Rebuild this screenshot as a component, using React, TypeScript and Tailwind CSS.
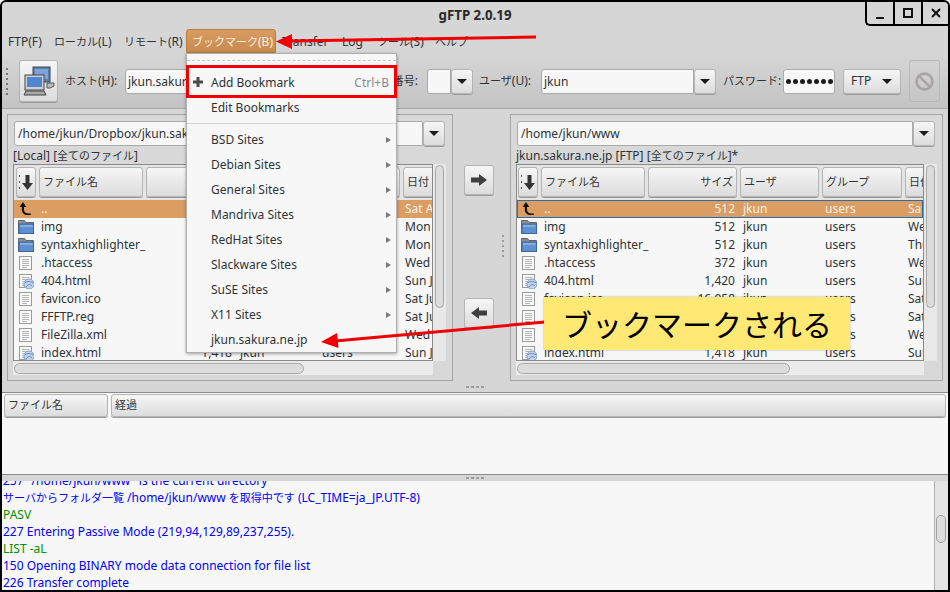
import type { ReactNode } from 'react';
import { Ban, X } from 'lucide-react';

type FileKind = 'up' | 'folder' | 'doc' | 'html';

const files: { kind: FileKind; name: string; size: string; date: string; dateR: string }[] = [
  { kind: 'up', name: '..', size: '512', date: 'Sat Aug', dateR: 'Sat' },
  { kind: 'folder', name: 'img', size: '512', date: 'Mon Jul', dateR: 'Wed' },
  { kind: 'folder', name: 'syntaxhighlighter_', size: '512', date: 'Mon Jul', dateR: 'Thu' },
  { kind: 'doc', name: '.htaccess', size: '372', date: 'Wed Jul', dateR: 'Wed' },
  { kind: 'html', name: '404.html', size: '1,420', date: 'Sun Jul', dateR: 'Sun' },
  { kind: 'doc', name: 'favicon.ico', size: '16,958', date: 'Sat Jul', dateR: 'Sat' },
  { kind: 'doc', name: 'FFFTP.reg', size: '1,024', date: 'Sat Jul', dateR: 'Sat' },
  { kind: 'doc', name: 'FileZilla.xml', size: '2,310', date: 'Wed Jul', dateR: 'Wed' },
  { kind: 'html', name: 'index.html', size: '1,418', date: 'Sun Jul', dateR: 'Sun' },
];

const bookmarks = ['BSD Sites', 'Debian Sites', 'General Sites', 'Mandriva Sites', 'RedHat Sites', 'Slackware Sites', 'SuSE Sites', 'X11 Sites'];

const btn = 'bg-gradient-to-b from-[#f6f6f6] to-[#dcdcdc] border border-[#b4b4b4] rounded-[3px] shadow-[0_1px_0_#9a9a9a]';

// japanese runs sit a bit smaller than the latin text in the reference
const J = ({ children }: { children: ReactNode }) => <span className="text-[11px]">{children}</span>;

const Caret = () => <span className="w-0 h-0 border-x-[5px] border-x-transparent border-t-[5px] border-t-[#1c1c1c]" />;

const ComboBtn = () => (
  <div className={`${btn} w-[22px] h-[25px] flex items-center justify-center shrink-0`}>
    <Caret />
  </div>
);

const FileIcon = ({ kind }: { kind: FileKind }) => {
  if (kind === 'up')
    return (
      <svg width="16" height="16" viewBox="0 0 16 16" className="shrink-0">
        <path d="M5 1 1.500 6h2.300v2.500c0 3.500 2.500 5.500 6 5.500h3v-1.500h-2.500c-2.500 0-4.300-1.500-4.300-4V6h2.300z" fill="#111" />
      </svg>
    );
  if (kind === 'folder')
    return (
      <svg width="16" height="16" viewBox="0 0 16 16" className="shrink-0">
        <path d="M.5 1.500h6l1.500 2h7.500v11H.5z" fill="#8a8f96" stroke="#5f6670" />
        <rect x="1" y="5" width="14.500" height="9.500" fill="#5f90cf" stroke="#3c659c" />
        <rect x="2" y="6" width="12.500" height="2" fill="#86aedd" />
      </svg>
    );
  return (
    <svg width="16" height="16" viewBox="0 0 16 16" className="shrink-0">
      <rect x="1.500" y="1.500" width="12" height="13" fill="#f9f9f9" stroke="#9a9a9a" />
      <path d="M4 4.500h7M4 6.500h7M4 8.500h7M4 10.500h7M4 12.500h5" stroke="#b5b5b5" />
      {kind === 'html' && (
        <>
          <circle cx="11" cy="11" r="5" fill="#c3d5ec" stroke="#7f9fca" />
          <path d="M7 10c2-2 5-2 8 0M8 14c2-3 4-3 6-1" stroke="#5b80b5" fill="none" />
        </>
      )}
    </svg>
  );
};

const HeaderCell = ({ label, className }: { label?: string; className: string }) => (
  <div className={`${btn} shrink-0 flex items-center whitespace-nowrap overflow-hidden ${className}`}>
    {label && <J>{label}</J>}
  </div>
);

const SortCell = () => (
  <div className={`${btn} h-[30px] w-[20px] shrink-0 flex items-center justify-center gap-[2px]`}>
    <span className="flex flex-col gap-[4px]">
      <i className="block w-[1px] h-[2px] bg-[#555]" />
      <i className="block w-[1px] h-[2px] bg-[#555]" />
      <i className="block w-[1px] h-[2px] bg-[#555]" />
    </span>
    <svg width="11" height="15" viewBox="0 0 11 15">
      <path d="M3.500 0h4v8H11l-5.500 7L0 8h3.500z" fill="#333" />
    </svg>
  </div>
);

const Pane = ({ right, path, label }: { right?: boolean; path: string; label: ReactNode }) => (
  <div className={`h-[267px] shrink-0 border border-[#a6a6a6] bg-[#d8d8d8] pt-[6px] ${right ? 'w-[433px]' : 'w-[446px]'}`}>
    <div className="flex ml-[6px] h-[25px]">
      <div className={`h-[25px] bg-[#f7f7f7] border border-[#aaaaaa] rounded-l-[3px] pl-[3px] text-[12px] leading-[23px] overflow-hidden whitespace-nowrap ${right ? 'w-[396px]' : 'w-[409px]'}`}>{path}</div>
      <ComboBtn />
    </div>
    <div className="ml-[5px] h-[18px] text-[12px] leading-[19px] whitespace-nowrap">{label}</div>
    <div className="flex ml-[5px] h-[197px]">
      <div className={`h-[197px] border border-[#8a8a8a] bg-[#f7f7f7] overflow-hidden shrink-0 ${right ? 'w-[408px]' : 'w-[420px]'}`}>
        <div className={`flex pt-[2px] h-[35px] bg-[#e4e4e4] ${right ? 'pl-[1px]' : 'pl-[2px]'}`}>
          <SortCell />
          <HeaderCell label="ファイル名" className="h-[30px] ml-[3px] w-[104px] pl-[3px]" />
          <HeaderCell label={right ? 'サイズ' : ''} className="h-[30px] ml-[3px] w-[89px] pr-[3px] justify-end" />
          <HeaderCell label="ユーザ" className="h-[30px] ml-[3px] w-[79px] pl-[3px]" />
          <HeaderCell label="グループ" className="h-[30px] ml-[3px] w-[80px] pl-[3px]" />
          <HeaderCell label="日付" className="h-[30px] ml-[3px] w-[40px] pl-[3px]" />
        </div>
        {files.map((f, i) => (
          <div
            key={f.name}
            className={`flex items-center h-[18px] pl-[4px] text-[12px] whitespace-nowrap ${i === 0 ? 'bg-[#db9d62] text-[#f6f1e8]' : ''} ${i === 0 && right ? 'outline outline-1 -outline-offset-1 outline-[#2a6ea8]' : ''}`}
          >
            <FileIcon kind={f.kind} />
            <span className="ml-[7px] w-[130px] shrink-0">{f.name}</span>
            <span className="w-[61px] shrink-0 text-right">{f.size}</span>
            <span className="ml-[8px] w-[82px] shrink-0">jkun</span>
            <span className="w-[83px] shrink-0">users</span>
            <span className="shrink-0">{right ? f.dateR : f.date}</span>
          </div>
        ))}
      </div>
      <div className="w-[13px] bg-[#e8e8e8] shrink-0 pl-[2px]">
        <div className="w-[9px] h-[143px] mt-[1px] rounded-full border border-[#a8a8a8] bg-[#dcdcdc]" />
      </div>
    </div>
    <div className={`ml-[5px] h-[14px] pt-[2px] pl-[1px] bg-[#ebebeb] ${right ? 'w-[408px]' : 'w-[420px]'}`}>
      <div className={`h-[11px] rounded-full border border-[#a8a8a8] bg-[#dcdcdc] ${right ? 'w-[273px]' : 'w-[290px]'}`} />
    </div>
  </div>
);

const Grip = () => (
  <div className="flex justify-center gap-[2px]">
    {[0, 1, 2, 3].map((i) => (
      <i key={i} className="block w-[3px] h-[2px] bg-[#9c9c9c]" />
    ))}
  </div>
);

const ArrowBtn = ({ left }: { left?: boolean }) => (
  <div className={`${btn} w-[30px] h-[30px] flex items-center justify-center`}>
    <svg width="16" height="12" viewBox="0 0 16 12" className={left ? 'rotate-180' : ''}>
      <path d="M0 3.500h8V0l8 6-8 6V8.500H0z" fill="#3f3f3f" />
    </svg>
  </div>
);

export default function App() {
  return (
    <div className="relative w-[950px] h-[592px] overflow-hidden bg-white text-[#2e3436] font-['Noto_Sans','Noto_Sans_CJK_JP',sans-serif]">
      <div className="w-[950px] h-[592px] border-2 border-black rounded-t-[6px] bg-[#d6d6d6] flex flex-col overflow-hidden">
        {/* titlebar */}
        <div className="relative h-[26px] shrink-0 flex items-center justify-center pt-[1px] text-[13.3px] font-bold text-[#2a2a2a]">
          gFTP 2.0.19
          <div className="absolute top-0 right-0 h-[24px] flex border-l-2 border-b-2 border-black rounded-bl-[5px]">
            <div className="w-[26px] flex items-end justify-center pb-[5px]">
              <i className="block w-[8px] h-[2px] bg-[#111]" />
            </div>
            <div className="w-[28px] border-l-2 border-black flex items-center justify-center">
              <i className="block w-[10px] h-[10px] border-2 border-[#111]" />
            </div>
            <div className="w-[27px] border-l-2 border-black flex items-center justify-center">
              <X size={14} strokeWidth={3.2} color="#111" />
            </div>
          </div>
        </div>

        {/* menubar */}
        <div className="h-[26px] shrink-0 flex items-center text-[12px] pl-[6px] whitespace-nowrap">
          <span className="w-[46px] pt-[1px]">FTP(F)</span>
          <span className="w-[70px] pt-[1px]"><J>ローカル</J>(L)</span>
          <span className="w-[68px] pt-[1px]"><J>リモート</J>(R)</span>
          <span className="w-[90px] -ml-[6px] h-[24px] leading-[24px] pl-[5px] rounded-t-[3px] bg-gradient-to-b from-[#d99b60] to-[#c98a4e] border border-[#b97c44] text-[#f8efe4]"><J>ブックマーク</J>(B)</span>
          <span className="ml-[6px] w-[60px] pt-[1px]">Transfer</span>
          <span className="w-[35px] pt-[1px]">Log</span>
          <span className="w-[58px] pt-[1px]"><J>ツール</J>(S)</span>
          <span className="pt-[1px]"><J>ヘルプ</J></span>
        </div>

        {/* toolbar */}
        <div className="h-[55px] shrink-0 flex items-center border-b border-[#a8a8a8] bg-gradient-to-b from-[#d6d6d6] to-[#c3c3c3] text-[12px] whitespace-nowrap">
          <div className="ml-[4px] w-[3px] flex flex-col gap-[3px]">
            {[0, 1, 2, 3, 4, 5].map((i) => (
              <i key={i} className="block w-[2px] h-[2px] bg-[#777]" />
            ))}
          </div>
          <div className={`${btn} ml-[10px] w-[39px] h-[42px] flex items-center justify-center shrink-0`}>
            <svg width="32" height="32" viewBox="0 0 32 32">
              <rect x="10" y="2" width="17" height="15" fill="#5a7fb5" stroke="#444" />
              <rect x="12" y="4" width="13" height="10" fill="#7ba3d8" />
              <path d="M24 18h7v3l-4 2h-3z" fill="#bbb" stroke="#555" />
              <rect x="2" y="10" width="19" height="15" fill="#cfcfcf" stroke="#444" />
              <rect x="4" y="12" width="15" height="10" fill="#4f86d0" />
              <path d="M3 26h18l2 4H1z" fill="#aaa" stroke="#444" />
            </svg>
          </div>
          <span className="ml-[7px] w-[53px]"><J>ホスト</J>(H):</span>
          <div className="ml-[7px] w-[205px] h-[25px] bg-[#f7f7f7] border border-[#aaaaaa] rounded-l-[3px] pl-[2px] leading-[23px]">jkun.sakura.ne.jp</div>
          <ComboBtn />
          <span className="ml-[4px] w-[62px] text-right"><J>ポート番号</J>:</span>
          <div className="ml-[9px] w-[24px] h-[25px] bg-[#f7f7f7] border border-[#aaaaaa] rounded-l-[3px]" />
          <ComboBtn />
          <span className="ml-[6px] w-[54px]"><J>ユーザ</J>(U):</span>
          <div className="ml-[8px] w-[153px] h-[25px] bg-[#f7f7f7] border border-[#aaaaaa] rounded-l-[3px] pl-[2px] leading-[23px]">jkun</div>
          <ComboBtn />
          <span className="ml-[7px] w-[55px]"><J>パスワード</J>:</span>
          <div className="ml-[5px] w-[52px] h-[25px] bg-[#f7f7f7] border border-[#aaaaaa] rounded-[3px] flex items-center pl-[2px] gap-[2px]">
            {[0, 1, 2, 3, 4, 5, 6].map((i) => (
              <i key={i} className="block w-[5px] h-[5px] rounded-full bg-[#1c1c1c]" />
            ))}
          </div>
          <div className={`${btn} ml-[8px] w-[58px] h-[25px] flex items-center justify-between pl-[7px] pr-[8px]`}>
            <span>FTP</span>
            <Caret />
          </div>
          <div className="ml-[8px] w-[31px] h-[42px] border border-[#b8b8b8] rounded-[3px] flex items-center justify-center">
            <Ban size={19} strokeWidth={3.4} color="#a9a5a5" />
          </div>
        </div>

        {/* panes */}
        <div className="h-[272px] shrink-0 flex pt-[5px] pl-[5px]">
          <Pane path="/home/jkun/Dropbox/jkun.sakura.ne.jp" label={<>[Local] [<J>全てのファイル</J>]</>} />
          <div className="w-[57px] shrink-0 relative pl-[11px]">
            <div className="mt-[51px]">
              <ArrowBtn />
            </div>
            <div className="mt-[103px]">
              <ArrowBtn left />
            </div>
            <div className="absolute left-[49px] top-[121px] flex flex-col gap-[3px]">
              {[0, 1, 2, 3, 4].map((i) => (
                <i key={i} className="block w-[2px] h-[2px] bg-[#9c9c9c]" />
              ))}
            </div>
          </div>
          <Pane right path="/home/jkun/www" label={<>jkun.sakura.ne.jp [FTP] [<J>全てのファイル</J>]*</>} />
        </div>

        <div className="h-[11px] shrink-0 flex items-center">
          <div className="w-full">
            <Grip />
          </div>
        </div>

        {/* transfer list */}
        <div className="h-[83px] shrink-0 border-y border-[#8a8a8a] bg-[#f7f7f7]">
          <div className="flex gap-[3px] pt-[1px] pl-[2px] pr-[2px]">
            <HeaderCell label="ファイル名" className="h-[23px] w-[104px] pl-[3px]" />
            <HeaderCell label="経過" className="h-[23px] flex-1 pl-[3px]" />
          </div>
        </div>

        <div className="h-[6px] shrink-0 flex items-center">
          <div className="w-full">
            <Grip />
          </div>
        </div>

        {/* log */}
        <div className="flex-1 min-h-0 flex bg-[#f7f7f7] overflow-hidden">
          <div className="flex-1 overflow-hidden text-[12px] leading-[17px] text-[#0000ff] pl-[1px] whitespace-nowrap">
            <div className="-mt-[9px]">
              <div>257 "/home/jkun/www" is the current directory</div>
              <div><J>サーバからフォルダ一覧</J> /home/jkun/www <J>を取得中です</J> (LC_TIME=ja_JP.UTF-8)</div>
              <div className="text-[#009000]">PASV</div>
              <div>227 Entering Passive Mode (219,94,129,89,237,255).</div>
              <div className="text-[#009000]">LIST -aL</div>
              <div>150 Opening BINARY mode data connection for file list</div>
              <div>226 Transfer complete</div>
            </div>
          </div>
          <div className="w-[14px] shrink-0 border-l border-[#b0b0b0] bg-[#e4e4e4] pl-[1px] pt-[34px]">
            <div className="w-[10px] h-[28px] rounded-full border border-[#a0a0a0] bg-[#dcdcdc]" />
          </div>
        </div>
      </div>

      {/* open bookmark menu */}
      <div className="absolute left-[186px] top-[53px] w-[211px] h-[300px] border border-[#b0b0b0] bg-[#f7f7f7] shadow-[0_1px_3px_rgba(0,0,0,0.35)] text-[12px] whitespace-nowrap">
        <div className="h-[16px] pt-[6px]">
          <div className="border-t border-dashed border-[#c8c8c8]" />
        </div>
        <div className="h-[25px] flex items-center relative pl-[24px] pr-[7px] justify-between">
          <svg width="10" height="10" viewBox="0 0 10 10" className="absolute left-[6px] top-[7px]">
            <path d="M3.500 0h3v3.500H10v3H6.500V10h-3V6.500H0v-3h3.500z" fill="#4a4a4a" />
          </svg>
          <span>Add Bookmark</span>
          <span className="text-[#8a8a8a]">Ctrl+B</span>
        </div>
        <div className="h-[25px] flex items-center pl-[24px]">Edit Bookmarks</div>
        <div className="h-[7px] pt-[3px]">
          <div className="border-t border-[#d4d4d4]" />
        </div>
        {bookmarks.map((b) => (
          <div key={b} className="h-[25px] flex items-center justify-between pl-[24px] pr-[5px]">
            <span>{b}</span>
            <span className="w-0 h-0 border-y-[3px] border-y-transparent border-l-[5px] border-l-[#7a7a7a]" />
          </div>
        ))}
        <div className="h-[25px] flex items-center pl-[24px]">jkun.sakura.ne.jp</div>
      </div>

      <div className="absolute left-[186px] top-[65px] w-[211px] h-[33px] border-[3px] border-[#f00000]" />

      {/* annotation arrows */}
      <svg width="950" height="592" className="absolute left-0 top-0 pointer-events-none">
        <path d="M536 37 290 41" stroke="#f00000" strokeWidth="3" />
        <path d="M276 41.500 292 34v15z" fill="#f00000" />
        <path d="M545 322 335 341" stroke="#f00000" strokeWidth="3" />
        <path d="M321 342 337 333l1.500 15z" fill="#f00000" />
      </svg>

      <div className="absolute left-[544px] top-[297px] w-[306px] h-[53px] bg-[#ffe873] shadow-[0_0_2px_rgba(0,0,0,0.3)] flex items-center justify-center text-[30px] text-black font-['Noto_Sans_CJK_JP',sans-serif] whitespace-nowrap">
        ブックマークされる
      </div>
    </div>
  );
}
